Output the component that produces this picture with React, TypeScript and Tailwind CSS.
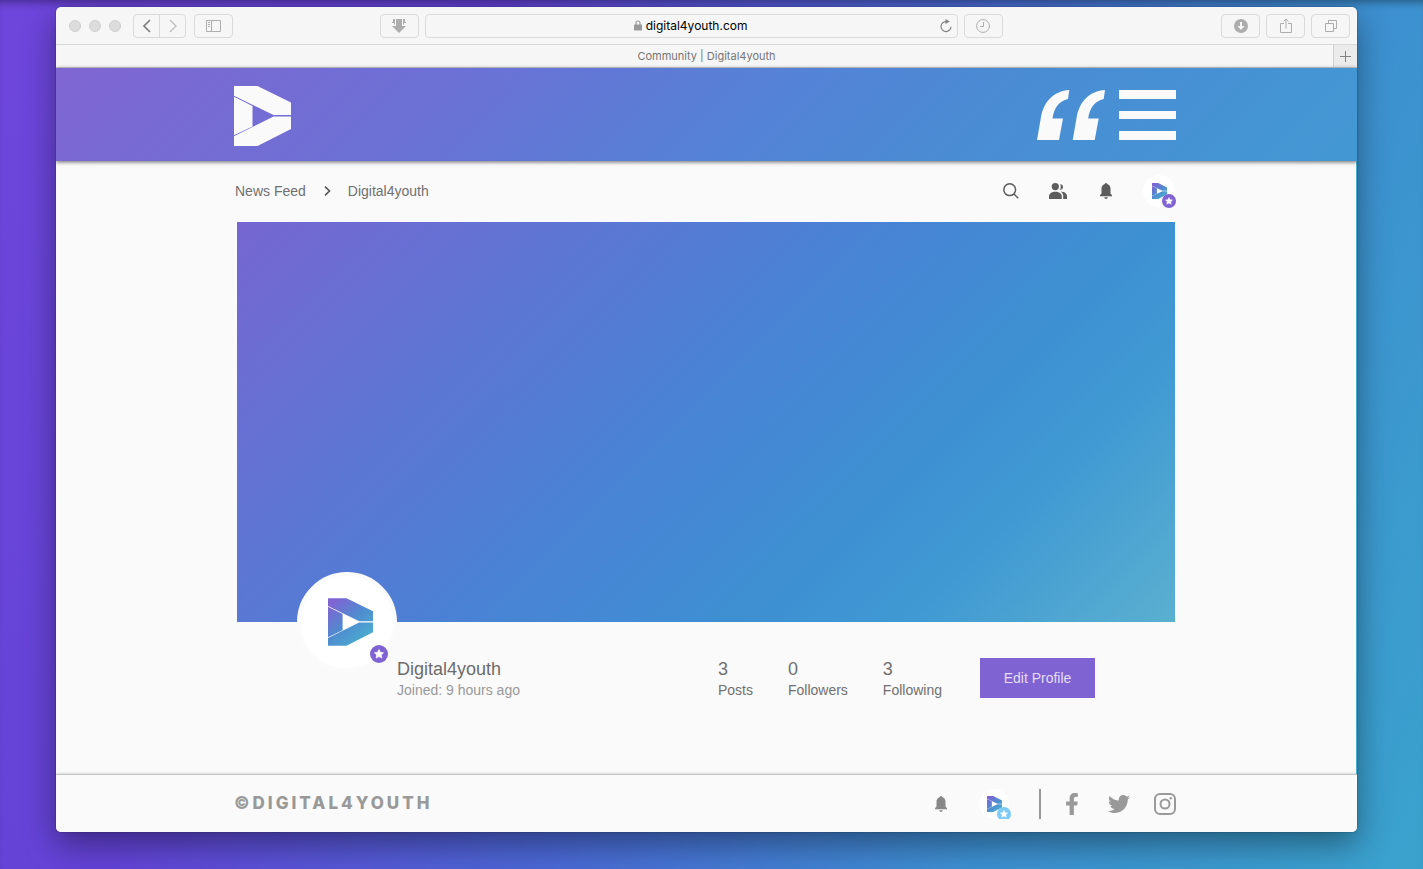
import { useId } from 'react';
import type { ReactNode } from 'react';
import { FaFacebookF, FaTwitter } from 'react-icons/fa';

interface Stat {
  value: number;
  label: string;
}

const stats: Stat[] = [
  { value: 3, label: 'Posts' },
  { value: 0, label: 'Followers' },
  { value: 3, label: 'Following' },
];

function Logo({ className, gradient = false }: { className: string; gradient?: boolean }) {
  const id = useId();
  return (
    <svg viewBox="0 0 57 60" className={className} fill={gradient ? `url(#${id})` : '#fafafa'} aria-hidden="true">
      <defs>
        <linearGradient id={id} gradientUnits="userSpaceOnUse" x1="6" y1="4" x2="46" y2="50">
          <stop offset="0" stopColor="#8063d2" />
          <stop offset="0.55" stopColor="#4f8ccf" />
          <stop offset="1" stopColor="#4ba9d0" />
        </linearGradient>
      </defs>
      <path d="M0 0H23.5L57 16.5V29H39.5L0 9.8Z" />
      <path d="M0 10.800L18.500 20V40.500L0 49.300Z" />
      <path d="M0 50.300L39.500 30.500H57V43L23.500 60H0Z" />
    </svg>
  );
}

function StarBadge({ className }: { className: string }) {
  return (
    <svg viewBox="0 0 18 18" className={className} aria-hidden="true">
      <circle cx="9" cy="9" r="9" fill="currentColor" />
      <path
        d="M9 4.4l1.4 2.9 3.2.4-2.3 2.2.6 3.2L9 11.6l-2.9 1.5.6-3.2-2.3-2.2 3.2-.4z"
        fill="#fff"
        stroke="#fff"
        strokeWidth="0.6"
        strokeLinejoin="round"
      />
    </svg>
  );
}

function Bell({ className }: { className: string }) {
  return (
    <svg viewBox="0 0 12 16" className={className} fill="currentColor" aria-hidden="true">
      <path d="M6 0c.7 0 1.1.4 1.2.9C9.300 1.500 10.500 3.200 10.500 5.500V10.500L12 12.300V13.200H0V12.300L1.500 10.500V5.500C1.500 3.200 2.700 1.500 4.800.9 4.900.4 5.300 0 6 0z" />
      <path d="M4.200 14.300h3.600C7.600 15.400 6.900 16 6 16s-1.600-.6-1.800-1.700z" />
    </svg>
  );
}

function ToolButton({ label, children }: { label: string; children: ReactNode }) {
  return (
    <button
      type="button"
      aria-label={label}
      className="flex h-6 w-[39px] shrink-0 items-center justify-center rounded border border-[#dadada] text-[#adadad]"
    >
      {children}
    </button>
  );
}

function BrowserToolbar() {
  return (
    <div className="flex h-[38px] items-center border-b border-[#d9d9d9] pr-[7px] pl-[13px]">
      <div className="flex gap-2">
        <span className="size-3 rounded-full border border-[#cfcfcf] bg-[#dcdcdc]" />
        <span className="size-3 rounded-full border border-[#cfcfcf] bg-[#dcdcdc]" />
        <span className="size-3 rounded-full border border-[#cfcfcf] bg-[#dcdcdc]" />
      </div>
      <div className="ml-3 flex h-6 w-[53px] shrink-0 rounded border border-[#dadada]">
        <button type="button" aria-label="Back" className="flex flex-1 items-center justify-center border-r border-[#dadada]">
          <svg viewBox="0 0 8 14" className="h-3.5 w-2" fill="none" stroke="#7d7d7d" strokeWidth="1.6">
            <path d="M7 1L1 7l6 6" />
          </svg>
        </button>
        <button type="button" aria-label="Forward" className="flex flex-1 items-center justify-center">
          <svg viewBox="0 0 8 14" className="h-3.5 w-2" fill="none" stroke="#bdbdbd" strokeWidth="1.3">
            <path d="M1 1l6 6-6 6" />
          </svg>
        </button>
      </div>
      <div className="mr-px ml-2">
        <ToolButton label="Show sidebar">
          <svg viewBox="0 0 15 12" className="h-3 w-[15px]" fill="none" stroke="currentColor">
            <path d="M.5.5h14v11H.5zM5.500.5v11M2 2.500h2M2 4.500h2M2 6.500h2" />
          </svg>
        </ToolButton>
      </div>
      <div className="flex-2" />
      <div className="flex w-[623px] min-w-0 gap-1.5">
        <ToolButton label="Download media">
          <svg viewBox="0 0 14 14" className="size-3.5" fill="currentColor">
            <path d="M4 0h6v7h4l-7 7-7-7h4zM1 0h2v5.500H2V4H0V3h1zM13 0h-2v5.500h1V4h2V3h-1z" />
          </svg>
        </ToolButton>
        <div className="flex h-6 min-w-0 flex-1 items-center rounded border border-[#dadada] pr-[5px] pl-4">
          <div className="flex flex-1 items-center justify-center gap-1">
            <svg viewBox="0 0 8 11" className="h-[11px] w-2" aria-hidden="true">
              <path d="M2 5V3a2 2 0 0 1 4 0v2" fill="none" stroke="#999" strokeWidth="1.200" />
              <rect y="4.500" width="8" height="6" rx=".5" fill="#999" />
            </svg>
            <input
              type="text"
              aria-label="Address"
              defaultValue="digital4youth.com"
              className="field-sizing-content bg-transparent font-['Inter',sans-serif] text-[12px] leading-4 text-black outline-none"
            />
          </div>
          <button type="button" aria-label="Reload">
            <svg viewBox="0 0 12 14" className="h-3.5 w-3" fill="none" stroke="#858585" strokeWidth="1.200">
              <path d="M6.500 2.600A5 5 0 1 0 11 7.800" />
              <path d="M5.500 0v5L9.900 2.500z" fill="#858585" stroke="none" />
            </svg>
          </button>
        </div>
        <ToolButton label="History">
          <svg viewBox="0 0 14 14" className="size-3.5" fill="none" stroke="currentColor">
            <circle cx="7" cy="7" r="6.400" />
            <path d="M7.500 3v4.500h-3.500" />
          </svg>
        </ToolButton>
      </div>
      <div className="flex-3" />
      <div className="flex gap-1.5">
        <ToolButton label="Downloads">
          <svg viewBox="0 0 14 14" className="size-3.5" aria-hidden="true">
            <circle cx="7" cy="7" r="7" fill="#adadad" />
            <path d="M6 3h2v4h2.500L7 11 3.500 7H6z" fill="#f6f6f6" />
          </svg>
        </ToolButton>
        <ToolButton label="Share">
          <svg viewBox="0 0 12 16" className="h-4 w-3" fill="none" stroke="currentColor">
            <path d="M4 5.500H.5v9h11v-9H8M6 10.500V1M3.500 3.500L6 1l2.500 2.500" />
          </svg>
        </ToolButton>
        <ToolButton label="Show all tabs">
          <svg viewBox="0 0 12 12" className="size-3" fill="none" stroke="currentColor">
            <path d="M.5 3.500h8v8h-8zM3.500 3.500v-3h8v8h-3" />
          </svg>
        </ToolButton>
      </div>
    </div>
  );
}

function TabBar() {
  return (
    <div className="flex h-[23px] border-b border-[#cfcfcf]">
      <button type="button" className="flex-1 pl-6 font-['Inter',sans-serif] text-[11px] leading-[22px] text-[#757575]">
        Community | Digital4youth
      </button>
      <button type="button" aria-label="New tab" className="flex w-6 items-center justify-center border-l border-[#d0d0d0] bg-[#ebebeb]">
        <svg viewBox="0 0 11 11" className="size-[11px]" fill="none" stroke="#808080">
          <path d="M5.500 0v11M0 5.500h11" />
        </svg>
      </button>
    </div>
  );
}

function SiteHeader() {
  return (
    <header className="relative h-[93px] bg-linear-[135deg,#8066d2_0%,#6b71d5_30%,#5581d6_52%,#4a8cd4_70%,#4298d3_100%] shadow-[0_1px_4px_rgba(0,0,0,0.6)]">
      <div className="mx-auto flex h-full max-w-[945px] items-center justify-between pt-0.5 pr-[3px]">
        <a href="#" aria-label="Digital4youth">
          <Logo className="h-[60px] w-[57px]" />
        </a>
        <div className="flex items-center gap-3.5 pb-0.5">
          <a href="#" aria-label="Quotes">
            <svg viewBox="0 0 68 50" className="h-[50px] w-[68px]" fill="#fafafa">
              <path d="M0 50L4 27C7 11 17 1 32.300 0L31 9C22 11 17 18 15.500 28.500H26L22 50Z" />
              <path d="M35.700 50L39.700 27C42.700 11 52.700 1 68 0L66.700 9C57.700 11 52.700 18 51.200 28.500H61.700L57.700 50Z" />
            </svg>
          </a>
          <button type="button" aria-label="Menu" className="flex h-[50px] w-[57px] flex-col justify-between">
            <span className="h-[9px] w-full bg-[#fafafa]" />
            <span className="h-2 w-full bg-[#fafafa]" />
            <span className="h-[9px] w-full bg-[#fafafa]" />
          </button>
        </div>
      </div>
    </header>
  );
}

function SubNav() {
  return (
    <div className="mb-0.5 flex h-[59px] items-center justify-between pr-0.5">
      <nav aria-label="Breadcrumb" className="flex items-center text-[14px] leading-5 text-[#707070]">
        <a href="#">News Feed</a>
        <svg viewBox="0 0 7 10" className="mr-[17px] ml-[18px] h-2.5 w-[7px]" fill="none" stroke="#555" strokeWidth="1.600">
          <path d="M1 .7L5.500 5 1 9.300" />
        </svg>
        <a href="#">Digital4youth</a>
      </nav>
      <div className="flex items-center text-[#5c5c5c]">
        <button type="button" aria-label="Search">
          <svg viewBox="0 0 16 16" className="size-4" fill="none" stroke="currentColor" strokeWidth="1.500">
            <circle cx="6.700" cy="6.700" r="5.900" />
            <path d="M11 11l4.300 4.300" />
          </svg>
        </button>
        <button type="button" aria-label="Members" className="ml-[30px]">
          <svg viewBox="0 0 18 16" className="h-4 w-[18px]" fill="currentColor">
            <circle cx="6.300" cy="3.600" r="3.600" />
            <path d="M0 16v-2.500C0 10.500 2.700 8.800 6.300 8.800s6.500 1.700 6.500 4.700V16z" />
            <path d="M10.800 6.800c1.300-1.600 1.300-4 .3-5.500C13 1.200 14 2.300 14 4s-1.300 3-3.200 2.800zM11.700 8.500c3.500.2 6.300 1.700 6.300 4.900V16h-3.800v-2.800c0-2-.9-3.600-2.500-4.700z" />
          </svg>
        </button>
        <button type="button" aria-label="Notifications" className="ml-[33px]">
          <Bell className="h-4 w-3" />
        </button>
        <a href="#" aria-label="My profile" className="relative ml-[31px] flex size-8 items-center justify-center rounded-full bg-white">
          <Logo gradient className="h-4 w-[15px]" />
          <StarBadge className="absolute -right-px -bottom-px size-3.5 text-[#8063d2]" />
        </a>
      </div>
    </div>
  );
}

function ProfileCard() {
  return (
    <section className="mx-0.5">
      <div className="h-[400px] bg-linear-[135deg,#7666d2_0%,#4a82d5_46%,#3d90d2_68%,#4099d3_80%,#5ab0d0_100%]" />
      <div className="flex h-[100px] justify-between pr-20 pl-[60px]">
        <div className="flex">
          <div className="relative -mt-[50px] flex size-[100px] items-center justify-center rounded-full border-4 border-[#fbfbfb] bg-white pl-1.5">
            <Logo gradient className="h-12 w-[45px]" />
            <StarBadge className="absolute right-[5px] bottom-[5px] size-[18px] text-[#8063d2]" />
          </div>
          <div className="pt-9">
            <h1 className="text-[18px] leading-[22px] text-[#6c6c6c]">Digital4youth</h1>
            <p className="text-[14px] leading-5 text-[#999]">Joined: 9 hours ago</p>
          </div>
        </div>
        <div className="flex items-start pt-9">
          <dl className="flex gap-[35px]">
            {stats.map((stat) => (
              <div key={stat.label} className="flex flex-col-reverse text-[#707070]">
                <dt className="text-[14px] leading-5">{stat.label}</dt>
                <dd className="text-[18px] leading-[22px]">{stat.value}</dd>
              </div>
            ))}
          </dl>
          <button type="button" className="ml-[38px] h-10 w-[115px] bg-[#8063d2] text-[14px] text-[#e4ddf5]">
            Edit Profile
          </button>
        </div>
      </div>
    </section>
  );
}

function SiteFooter() {
  return (
    <footer className="relative h-[58px] border-t border-[#c4c4c4] bg-[#fafafa] shadow-[0_-1px_2px_rgba(0,0,0,0.12)]">
      <div className="mx-auto flex h-full max-w-[945px] items-center justify-between pr-[3px]">
        <p className="font-['Inter',sans-serif] text-[17px] font-extrabold tracking-[3px] text-[#999]">©DIGITAL4YOUTH</p>
        <div className="flex items-center text-[#999]">
          <button type="button" aria-label="Notifications" className="text-[#888]">
            <Bell className="h-4 w-3" />
          </button>
          <a href="#" aria-label="My profile" className="relative ml-8 flex size-[30px] items-center justify-center">
            <span className="flex size-[30px] items-center justify-center rounded-full bg-white">
              <Logo gradient className="h-4 w-[15px]" />
            </span>
            <span className="absolute -right-0.5 bottom-0 h-3 w-3.5 overflow-hidden">
              <StarBadge className="size-3.5 text-[#7ccaf5]" />
            </span>
          </a>
          <span className="ml-[30px] h-[30px] w-0.5 bg-[#999]" />
          <a href="#" aria-label="Facebook" className="ml-5">
            <FaFacebookF size={22} />
          </a>
          <a href="#" aria-label="Twitter" className="ml-[25px]">
            <FaTwitter size={22} />
          </a>
          <a href="#" aria-label="Instagram" className="ml-6">
            <svg viewBox="0 0 22 22" className="size-[22px]" fill="none" stroke="currentColor" strokeWidth="2">
              <rect x="1" y="1" width="20" height="20" rx="5" />
              <circle cx="11" cy="11" r="4.500" />
              <circle cx="16.800" cy="5.200" r="1.200" fill="currentColor" stroke="none" />
            </svg>
          </a>
        </div>
      </div>
    </footer>
  );
}

export default function App() {
  return (
    <div className="flex min-h-screen bg-linear-[115deg,#6e46dc_0%,#6343d6_28%,#4a68d4_52%,#3d8fd0_75%,#3aa2cd_100%] pt-[7px] pr-[66px] pb-[37px] pl-14 font-['Liberation_Sans',Arial,sans-serif] shadow-[inset_0_8px_8px_-6px_rgba(0,0,0,0.4)]">
      <div className="flex min-w-0 flex-1 flex-col overflow-hidden rounded-[5px] bg-[#f6f6f6] shadow-[0_12px_32px_rgba(0,0,0,0.4),0_0_2px_rgba(0,0,0,0.4)]">
        <BrowserToolbar />
        <TabBar />
        <SiteHeader />
        <main className="flex-1 border-r border-[#4bb0d2] bg-[#fafafa]">
          <div className="mx-auto max-w-[942px]">
            <SubNav />
            <ProfileCard />
          </div>
        </main>
        <SiteFooter />
      </div>
    </div>
  );
}
